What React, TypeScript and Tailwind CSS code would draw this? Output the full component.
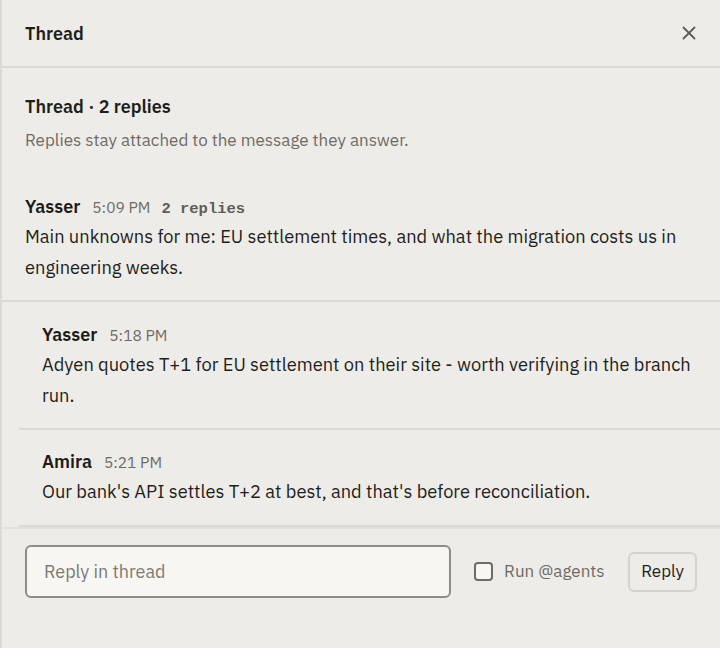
import React from "react";

const font = { fontFamily: '"IBM Plex Sans", "Noto Sans", "Open Sans", sans-serif' };

function Meta({ name, time, replies }: { name: string; time: string; replies?: string }) {
  return (
    <div className="flex items-baseline gap-[12px] leading-[28px] h-[28px]">
      <span className="text-[18px] font-semibold text-[#1c1b1a]">{name}</span>
      <span className="text-[15.5px] text-[#6e6b66]">{time}</span>
      {replies && (
        <span className="text-[15.5px] font-bold text-[#605d58] -ml-[1px]" style={{ fontFamily: '"Liberation Mono", monospace' }}>
          {replies}
        </span>
      )}
    </div>
  );
}

export default function App() {
  return (
    <div className="w-[720px] h-[648px] bg-[#eeece8] border-l-2 border-[#dcd9d4] flex flex-col text-[#1f1e1c]" style={font}>
      <div className="h-[68px] shrink-0 border-b-2 border-[#dcd9d4] px-[23px] flex items-center justify-between">
        <span className="text-[18px] font-semibold">Thread</span>
        <svg width="16" height="16" viewBox="0 0 16 16" fill="none" stroke="#5f5c58" strokeWidth="1.8" strokeLinecap="round">
          <path d="M2.5 2.5l11 11M13.5 2.5l-11 11" />
        </svg>
      </div>
      <div className="px-[23px] pt-[25px]">
        <div className="text-[18px] font-semibold leading-[28px]">Thread · 2 replies</div>
        <div className="text-[17px] text-[#6e6b66] leading-[28px] mt-[5px]">Replies stay attached to the message they answer.</div>
      </div>
      <div className="px-[23px] pt-[39px] pb-[17px] border-b-2 border-[#dcd9d4]">
        <Meta name="Yasser" time="5:09 PM" replies="2 replies" />
        <p className="text-[18.3px] leading-[31px]">
          Main unknowns for me: EU settlement times, and what the migration costs us in engineering weeks.
        </p>
      </div>
      <div className="pl-[17px]">
        <div className="pl-[23px] pr-[20px] pt-[19px] pb-[17px] border-b-2 border-[#dcd9d4]">
          <Meta name="Yasser" time="5:18 PM" />
          <p className="text-[18.3px] leading-[31px]">
            Adyen quotes T+1 for EU settlement on their site - worth verifying in the branch run.
          </p>
        </div>
        <div className="pl-[23px] pr-[20px] pt-[18px] pb-[18px] border-b-2 border-[#dcd9d4]">
          <Meta name="Amira" time="5:21 PM" />
          <p className="text-[18.3px] leading-[31px]">
            Our bank's API settles T+2 at best, and that's before reconciliation.
          </p>
        </div>
      </div>
      <div className="border-t-2 border-[#e3e0db] px-[23px] pt-[16px] flex items-center">
        <div className="w-[426px] h-[53px] shrink-0 rounded-[6px] border-2 border-[#8f8c87] bg-[#f7f6f3] flex items-center px-[17px]">
          <span className="text-[18px] text-[#7d7a75]">Reply in thread</span>
        </div>
        <label className="flex items-center gap-[11px] ml-[23px] whitespace-nowrap">
          <span className="w-[19px] h-[19px] shrink-0 rounded-[4px] border-2 border-[#6e6b66] bg-[#f7f6f3]" />
          <span className="text-[17px] text-[#6e6b66]">Run @agents</span>
        </label>
        <button className="ml-auto h-[40px] px-[11px] rounded-[6px] border-2 border-[#d6d3ce] bg-[#eeece8] text-[17px] text-[#1f1e1c] whitespace-nowrap">
          Reply
        </button>
      </div>
    </div>
  );
}
